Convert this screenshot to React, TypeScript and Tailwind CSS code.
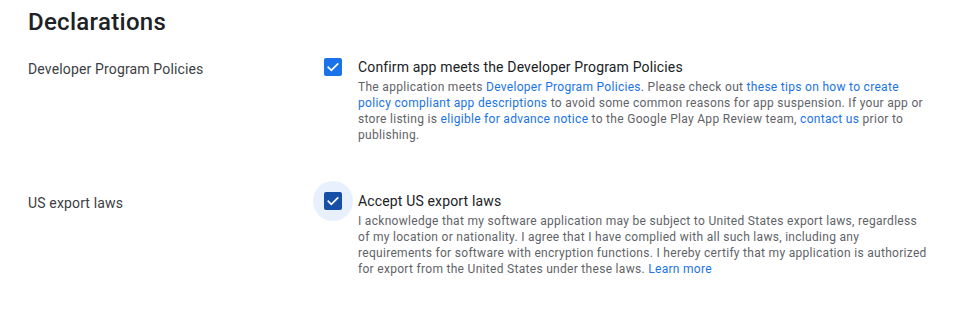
const LINK = "text-[#1a73e8]";

function Check({ focused }: { focused?: boolean }) {
  return (
    <div className="relative flex h-5 w-[18px] shrink-0 items-center justify-center">
      {focused && (
        <div className="absolute left-1/2 top-1/2 h-10 w-10 -translate-x-1/2 -translate-y-1/2 rounded-full bg-[#e8f0fe]" />
      )}
      <div
        className={
          "relative flex h-[18px] w-[18px] items-center justify-center rounded-[2px] " +
          (focused ? "bg-[#174ea6]" : "bg-[#1a73e8]")
        }
      >
        <svg viewBox="0 0 24 24" className="h-[16px] w-[16px]" fill="none">
          <path
            d="M5 12.5l4.5 4.5L19 7.5"
            stroke="white"
            strokeWidth="2.6"
            strokeLinecap="square"
          />
        </svg>
      </div>
    </div>
  );
}

function Row({
  label,
  title,
  focused,
  children,
}: {
  label: string;
  title: string;
  focused?: boolean;
  children: React.ReactNode;
}) {
  return (
    <div className="flex">
      <div className="mt-0.5 w-[296px] shrink-0 text-sm leading-5 tracking-[0.15px] text-[#3c4043]">
        {label}
      </div>
      <div className="flex gap-4">
        <Check focused={focused} />
        <div className="w-[572px]">
          <div className="text-sm leading-5 tracking-[0.15px] text-[#202124]">{title}</div>
          <p className="mt-0.5 text-xs leading-4 tracking-[0.3px] text-[#5f6368]">
            {children}
          </p>
        </div>
      </div>
    </div>
  );
}

export default function App() {
  return (
    <div
      className="min-h-screen bg-white pl-7 pt-[6px]"
      style={{ fontFamily: "Roboto, 'Liberation Sans', sans-serif" }}
    >
      <h1 className="text-2xl font-medium leading-8 tracking-[0.3px] text-[#202124]">
        Declarations
      </h1>

      <div className="mt-[19px] flex flex-col gap-12">
        <Row
          label="Developer Program Policies"
          title="Confirm app meets the Developer Program Policies"
        >
          The application meets <span className={LINK}>Developer Program Policies</span>.
          Please check out{" "}
          <span className={LINK}>
            these tips on how to create policy compliant app descriptions
          </span>{" "}
          to avoid some common reasons for app suspension. If your app or store
          listing is <span className={LINK}>eligible for advance notice</span> to
          the Google Play App Review team, <span className={LINK}>contact us</span>{" "}
          prior to publishing.
        </Row>

        <Row label="US export laws" title="Accept US export laws" focused>
          I acknowledge that my software application may be subject to United
          States export laws, regardless of my location or nationality. I agree
          that I have complied with all such laws, including any requirements for
          software with encryption functions. I hereby certify that my application
          is authorized for export from the United States under these laws.{" "}
          <span className={LINK}>Learn more</span>
        </Row>
      </div>
    </div>
  );
}
